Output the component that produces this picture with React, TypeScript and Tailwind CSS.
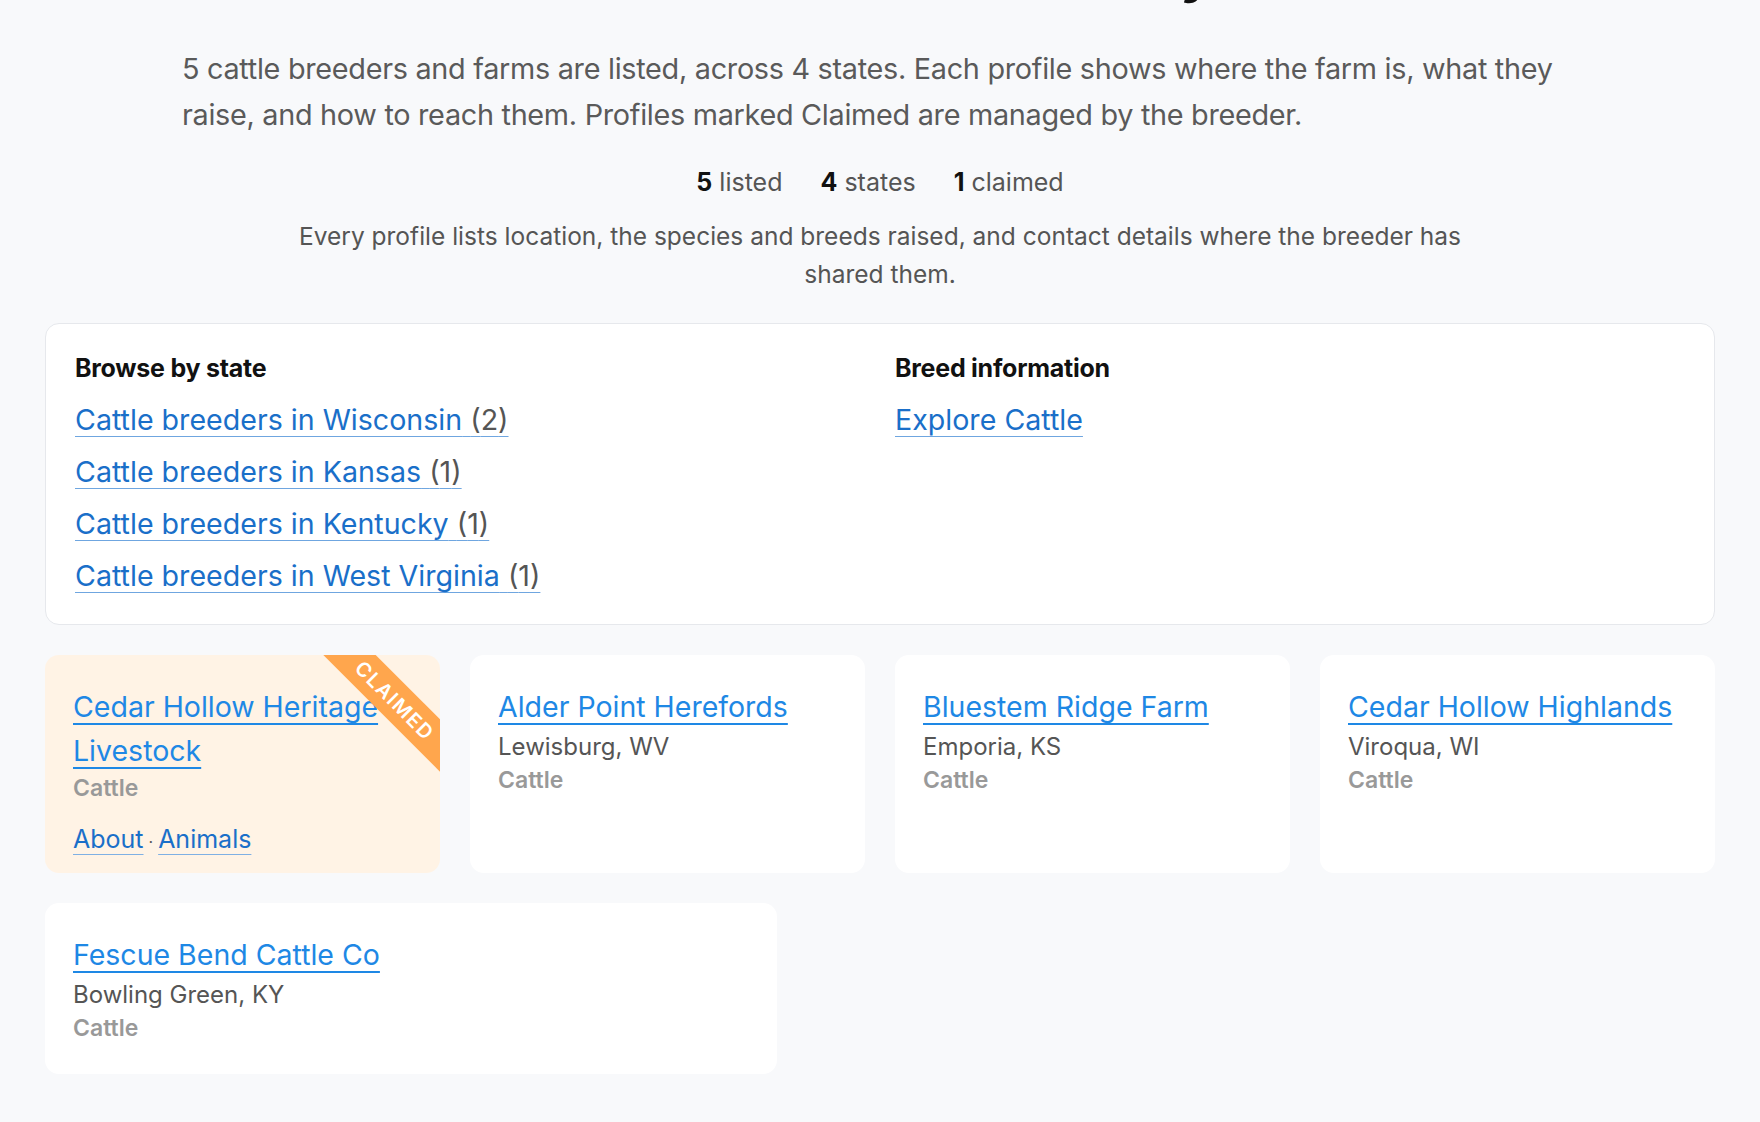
import React from "react";

type Breeder = {
  name: string;
  location?: string;
  species: string;
  claimed?: boolean;
  wide?: boolean;
};

const breeders: Breeder[] = [
  { name: "Cedar Hollow Heritage Livestock", species: "Cattle", claimed: true },
  { name: "Alder Point Herefords", location: "Lewisburg, WV", species: "Cattle" },
  { name: "Bluestem Ridge Farm", location: "Emporia, KS", species: "Cattle" },
  { name: "Cedar Hollow Highlands", location: "Viroqua, WI", species: "Cattle" },
  { name: "Fescue Bend Cattle Co", location: "Bowling Green, KY", species: "Cattle", wide: true },
];

const states = [
  { label: "Cattle breeders in Wisconsin", count: 2 },
  { label: "Cattle breeders in Kansas", count: 1 },
  { label: "Cattle breeders in Kentucky", count: 1 },
  { label: "Cattle breeders in West Virginia", count: 1 },
];

function BreederCard({ b }: { b: Breeder }) {
  return (
    <article
      className={
        b.claimed
          ? "relative overflow-hidden rounded-[14px] bg-[#fff3e5] px-7 pb-[14px] pt-[30px]"
          : b.wide
            ? "relative col-span-2 w-[732px] overflow-hidden rounded-[14px] bg-white px-7 pb-[31px] pt-[30px]"
            : "relative overflow-hidden rounded-[14px] bg-white px-7 pb-[31px] pt-[30px]"
      }
    >
      <a
        href="#"
        className="block pr-2 text-[28.5px] leading-[44px] text-[#1e88e5] underline decoration-[#1e88e5] decoration-2 underline-offset-[6px]"
      >
        {b.name}
      </a>
      {b.location && <p className="text-[24px] leading-[36px] text-[#555]">{b.location}</p>}
      <p className="text-[23px] font-semibold leading-[30px] text-[#999]">{b.species}</p>
      {b.claimed && (
        <div className="mt-[19px] text-[25px] leading-[34px] text-[#555]">
          <a href="#" className="text-[#1a6fc9] underline decoration-[#7fb0e4] decoration-1 underline-offset-[6px]">
            About
          </a>
          <span className="px-[5px] text-[16px]">·</span>
          <a href="#" className="text-[#1a6fc9] underline decoration-[#7fb0e4] decoration-1 underline-offset-[6px]">
            Animals
          </a>
        </div>
      )}
      {b.claimed && (
        <div className="pointer-events-none absolute right-[-55px] top-[27px] flex h-[37px] w-[200px] rotate-45 items-center justify-center bg-[#ffa64d] text-[20px] font-semibold tracking-[0.08em] text-white">
          CLAIMED
        </div>
      )}
    </article>
  );
}

export default function App() {
  return (
    <main
      className="flex min-h-screen flex-col bg-[#f8f9fb] px-[45px] pb-10 text-[#555]"
      style={{ fontFamily: 'Inter, "Noto Sans", sans-serif' }}
    >
      <h1 className="-mt-[59px] text-center text-[54px] font-bold leading-[64px] text-[#111]">
        Cattle Breeders Directory
      </h1>

      <p className="mx-auto mt-[41px] w-[1396px] text-[28.8px] leading-[46px] tracking-[-0.01em] text-[#5a5a5a]">
        5 cattle breeders and farms are listed, across 4 states. Each profile shows where the farm is, what they
        raise, and how to reach them. Profiles marked Claimed are managed by the breeder.
      </p>

      <div className="mt-[28px] flex items-center justify-center gap-[38px] text-[25px] leading-[32px] text-[#555]">
        <span>
          <b className="font-bold text-[#111]">5</b> listed
        </span>
        <span>
          <b className="font-bold text-[#111]">4</b> states
        </span>
        <span>
          <b className="font-bold text-[#111]">1</b> claimed
        </span>
      </div>

      <p className="mx-auto mt-[19px] max-w-[1200px] text-center text-[24.5px] leading-[38px] text-[#555]">
        Every profile lists location, the species and breeds raised, and contact details where the breeder has
        shared them.
      </p>

      <section className="mt-[30px] grid grid-cols-2 gap-[30px] rounded-[14px] border border-[#e6e8ec] bg-white px-[29px] pb-[28px] pt-[29px]">
        <div>
          <h2 className="text-[25px] font-bold leading-[30px] tracking-[-0.01em] text-[#111]">Browse by state</h2>
          <ul className="mt-[17px] flex flex-col gap-[12px]">
            {states.map((s) => (
              <li key={s.label}>
                <a
                  href="#"
                  className="text-[28.6px] leading-[40px] text-[#1a6fc9] underline decoration-[#6fa6e0] decoration-1 underline-offset-[6px]"
                >
                  {s.label} <span className="text-[#555]">({s.count})</span>
                </a>
              </li>
            ))}
          </ul>
        </div>
        <div>
          <h2 className="text-[25px] font-bold leading-[30px] tracking-[-0.01em] text-[#111]">Breed information</h2>
          <div className="mt-[17px]">
            <a
              href="#"
              className="text-[28.6px] leading-[40px] text-[#1a6fc9] underline decoration-[#6fa6e0] decoration-1 underline-offset-[6px]"
            >
              Explore Cattle
            </a>
          </div>
        </div>
      </section>

      <div className="mt-[30px] grid grid-cols-4 gap-[30px]">
        {breeders.map((b) => (
          <BreederCard key={b.name} b={b} />
        ))}
      </div>
    </main>
  );
}
